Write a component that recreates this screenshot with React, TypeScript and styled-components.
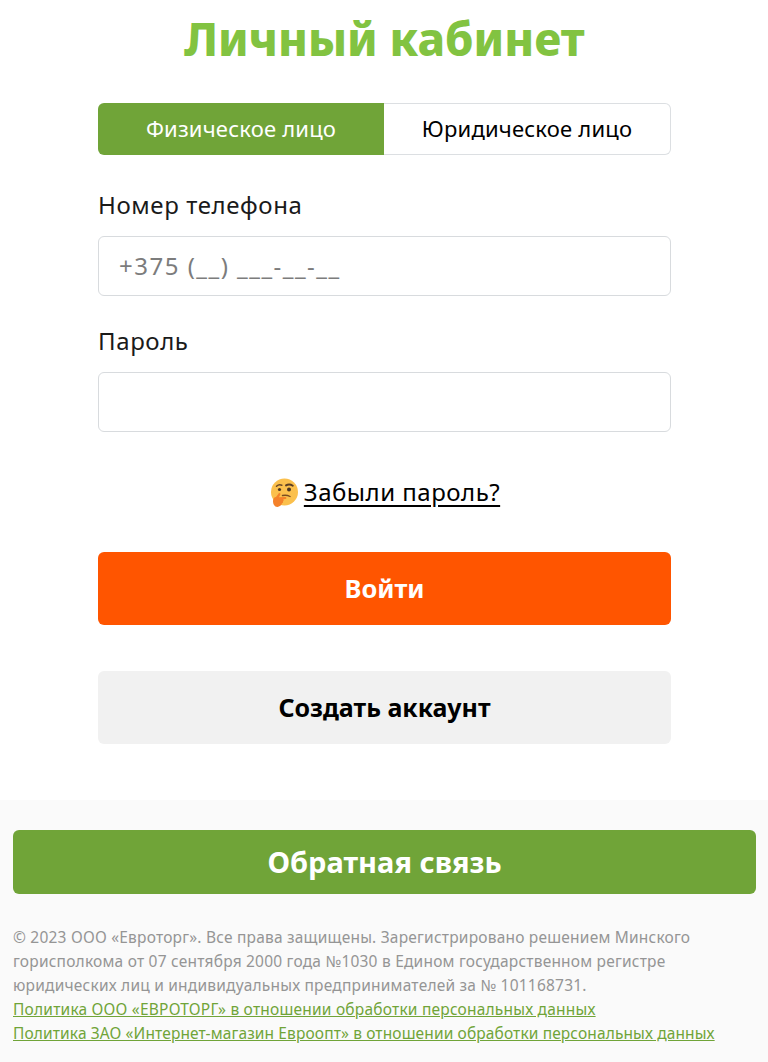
import { createGlobalStyle, styled } from "styled-components";

const GlobalStyle = createGlobalStyle`
  html, body {
    margin: 0;
    padding: 0;
    background: #fff;
    font-family: "Noto Sans", "Open Sans", sans-serif;
  }
`;

function ThinkingFace() {
  return (
    <svg width="30" height="30" viewBox="0 0 30 30" aria-hidden="true">
      <circle cx="15.5" cy="14" r="13.5" fill="#fbc04d" />
      <path d="M7.5 8.2c1.5-1.5 3.6-1.8 5.4-1" fill="none" stroke="#6b4a2a" strokeWidth="1.5" strokeLinecap="round" />
      <path d="M17 7.4c2-1.3 4.4-1.3 6.8.3" fill="none" stroke="#5a3e25" strokeWidth="1.9" strokeLinecap="round" />
      <circle cx="10.5" cy="11.5" r="1.6" fill="#4a3524" />
      <circle cx="20" cy="11.5" r="2" fill="#4a3524" />
      <path d="M13.5 17.5c2.8-.6 5.4-.2 7.6 1" fill="none" stroke="#7a4d22" strokeWidth="1.4" strokeLinecap="round" />
      <path
        d="M4 23c0-2.4 1.2-3.8 3-4l2.6-3.6c.9-1 2.4.1 1.7 1.3l-1.4 2.5 6.3-.3c1.5 0 1.6 1.9.2 2.1l-2.2.3c.7.7.5 1.7-.2 2.1.2.9-.2 1.6-1 1.9-.4 2-2.5 3.6-4.6 3.6-3 0-4.4-2.9-4.4-5.9z"
        fill="#f4812a"
      />
    </svg>
  );
}

export default function App() {
  return (
    <>
      <GlobalStyle />
      <Page>
        <Main>
          <Title>Личный кабинет</Title>
          <Tabs>
            <Tab $active>Физическое лицо</Tab>
            <Tab>Юридическое лицо</Tab>
          </Tabs>
          <Field>
            <Label>Номер телефона</Label>
            <Input type="text" placeholder="+375 (__) ___-__-__" />
          </Field>
          <Field>
            <Label>Пароль</Label>
            <Input type="password" />
          </Field>
          <Forgot>
            <ThinkingFace />
            <ForgotLink href="#">Забыли пароль?</ForgotLink>
          </Forgot>
          <ActionButton $primary>Войти</ActionButton>
          <ActionButton>Создать аккаунт</ActionButton>
        </Main>
        <Footer>
          <FeedbackButton>Обратная связь</FeedbackButton>
          <Legal>
            © 2023 ООО «Евроторг». Все права защищены. Зарегистрировано решением Минского
            <br />
            горисполкома от 07 сентября 2000 года №1030 в Едином государственном регистре
            <br />
            юридических лиц и индивидуальных предпринимателей за № 101168731.
            <br />
            <LegalLink href="#" $spacing={0.21}>Политика ООО «ЕВРОТОРГ» в отношении обработки персональных данных</LegalLink>
            <br />
            <LegalLink href="#" $spacing={0.12}>Политика ЗАО «Интернет-магазин Евроопт» в отношении обработки персональных данных</LegalLink>
          </Legal>
        </Footer>
      </Page>
    </>
  );
}

const Page = styled.div`
  min-height: 1062px;
  display: flex;
  flex-direction: column;
`;

const Main = styled.main`
  padding: 0 97px 0 98px;
  height: 800px;
  box-sizing: border-box;
`;

const Title = styled.h1`
  margin: 0;
  padding-top: 8px;
  height: 103px;
  box-sizing: border-box;
  line-height: 60px;
  font-size: 45.5px;
  font-weight: 800;
  text-align: center;
  color: #82c341;
`;

const Tabs = styled.div`
  display: flex;
  height: 52px;
`;

const Tab = styled.div<{ $active?: boolean }>`
  flex: 1;
  display: flex;
  align-items: center;
  justify-content: center;
  padding-bottom: 2px;
  box-sizing: border-box;
  font-size: 22px;
  letter-spacing: 0.2px;
  color: ${(p) => (p.$active ? "#fff" : "#000")};
  background: ${(p) => (p.$active ? "#70a438" : "#fff")};
  border: ${(p) => (p.$active ? "0" : "1.5px solid #dcdfe2")};
  border-left: 0;
  border-radius: ${(p) => (p.$active ? "6px 0 0 6px" : "0 6px 6px 0")};
`;

const Field = styled.div`
  padding-top: 32px;

  & + & {
    padding-top: 27px;
  }
`;

const Label = styled.div`
  font-size: 24px;
  letter-spacing: 0.6px;
  line-height: 36px;
  height: 49px;
  color: #1a1a1a;
`;

const Input = styled.input`
  display: block;
  width: 100%;
  height: 60px;
  box-sizing: border-box;
  padding: 0 20px 2px;
  border: 1.5px solid #d8dbde;
  border-radius: 6px;
  outline: none;
  background: #fff;
  font-family: inherit;
  font-size: 24px;
  letter-spacing: 1.5px;
  color: #333;

  &::placeholder {
    color: #7c7c7c;
    opacity: 1;
  }
`;

const Forgot = styled.div`
  display: flex;
  align-items: center;
  justify-content: center;
  gap: 5px;
  margin-top: 44px;
  height: 34px;
  margin-bottom: 42px;
`;

const ForgotLink = styled.a`
  font-size: 24px;
  letter-spacing: 0.5px;
  line-height: 30px;
  margin-top: -3px;
  color: #000;
  text-decoration: underline;
  text-underline-offset: 4px;
`;

const ActionButton = styled.button<{ $primary?: boolean }>`
  display: block;
  width: 100%;
  height: 73px;
  margin-bottom: 46px;
  padding: 0 0 2px;
  border: 0;
  border-radius: 6px;
  font-family: inherit;
  font-size: ${(p) => (p.$primary ? "25.5px" : "25px")};
  font-weight: 700;
  color: ${(p) => (p.$primary ? "#fff" : "#000")};
  background: ${(p) => (p.$primary ? "#ff5500" : "#f1f1f1")};
`;

const Footer = styled.footer`
  flex: 1;
  background: #fafafa;
  padding: 30px 12px 0 13px;
`;

const FeedbackButton = styled.button`
  display: block;
  width: 100%;
  height: 64px;
  padding: 0 0 2px;
  border: 0;
  border-radius: 6px;
  background: #70a438;
  color: #fff;
  font-family: inherit;
  font-size: 29px;
  font-weight: 700;
`;

const Legal = styled.p`
  margin: 31px 0 0;
  font-size: 15.5px;
  letter-spacing: 0.21px;
  line-height: 24px;
  color: #959595;
`;

const LegalLink = styled.a<{ $spacing: number }>`
  color: #70a438;
  letter-spacing: ${(p) => p.$spacing}px;
  text-decoration: underline;
`;
